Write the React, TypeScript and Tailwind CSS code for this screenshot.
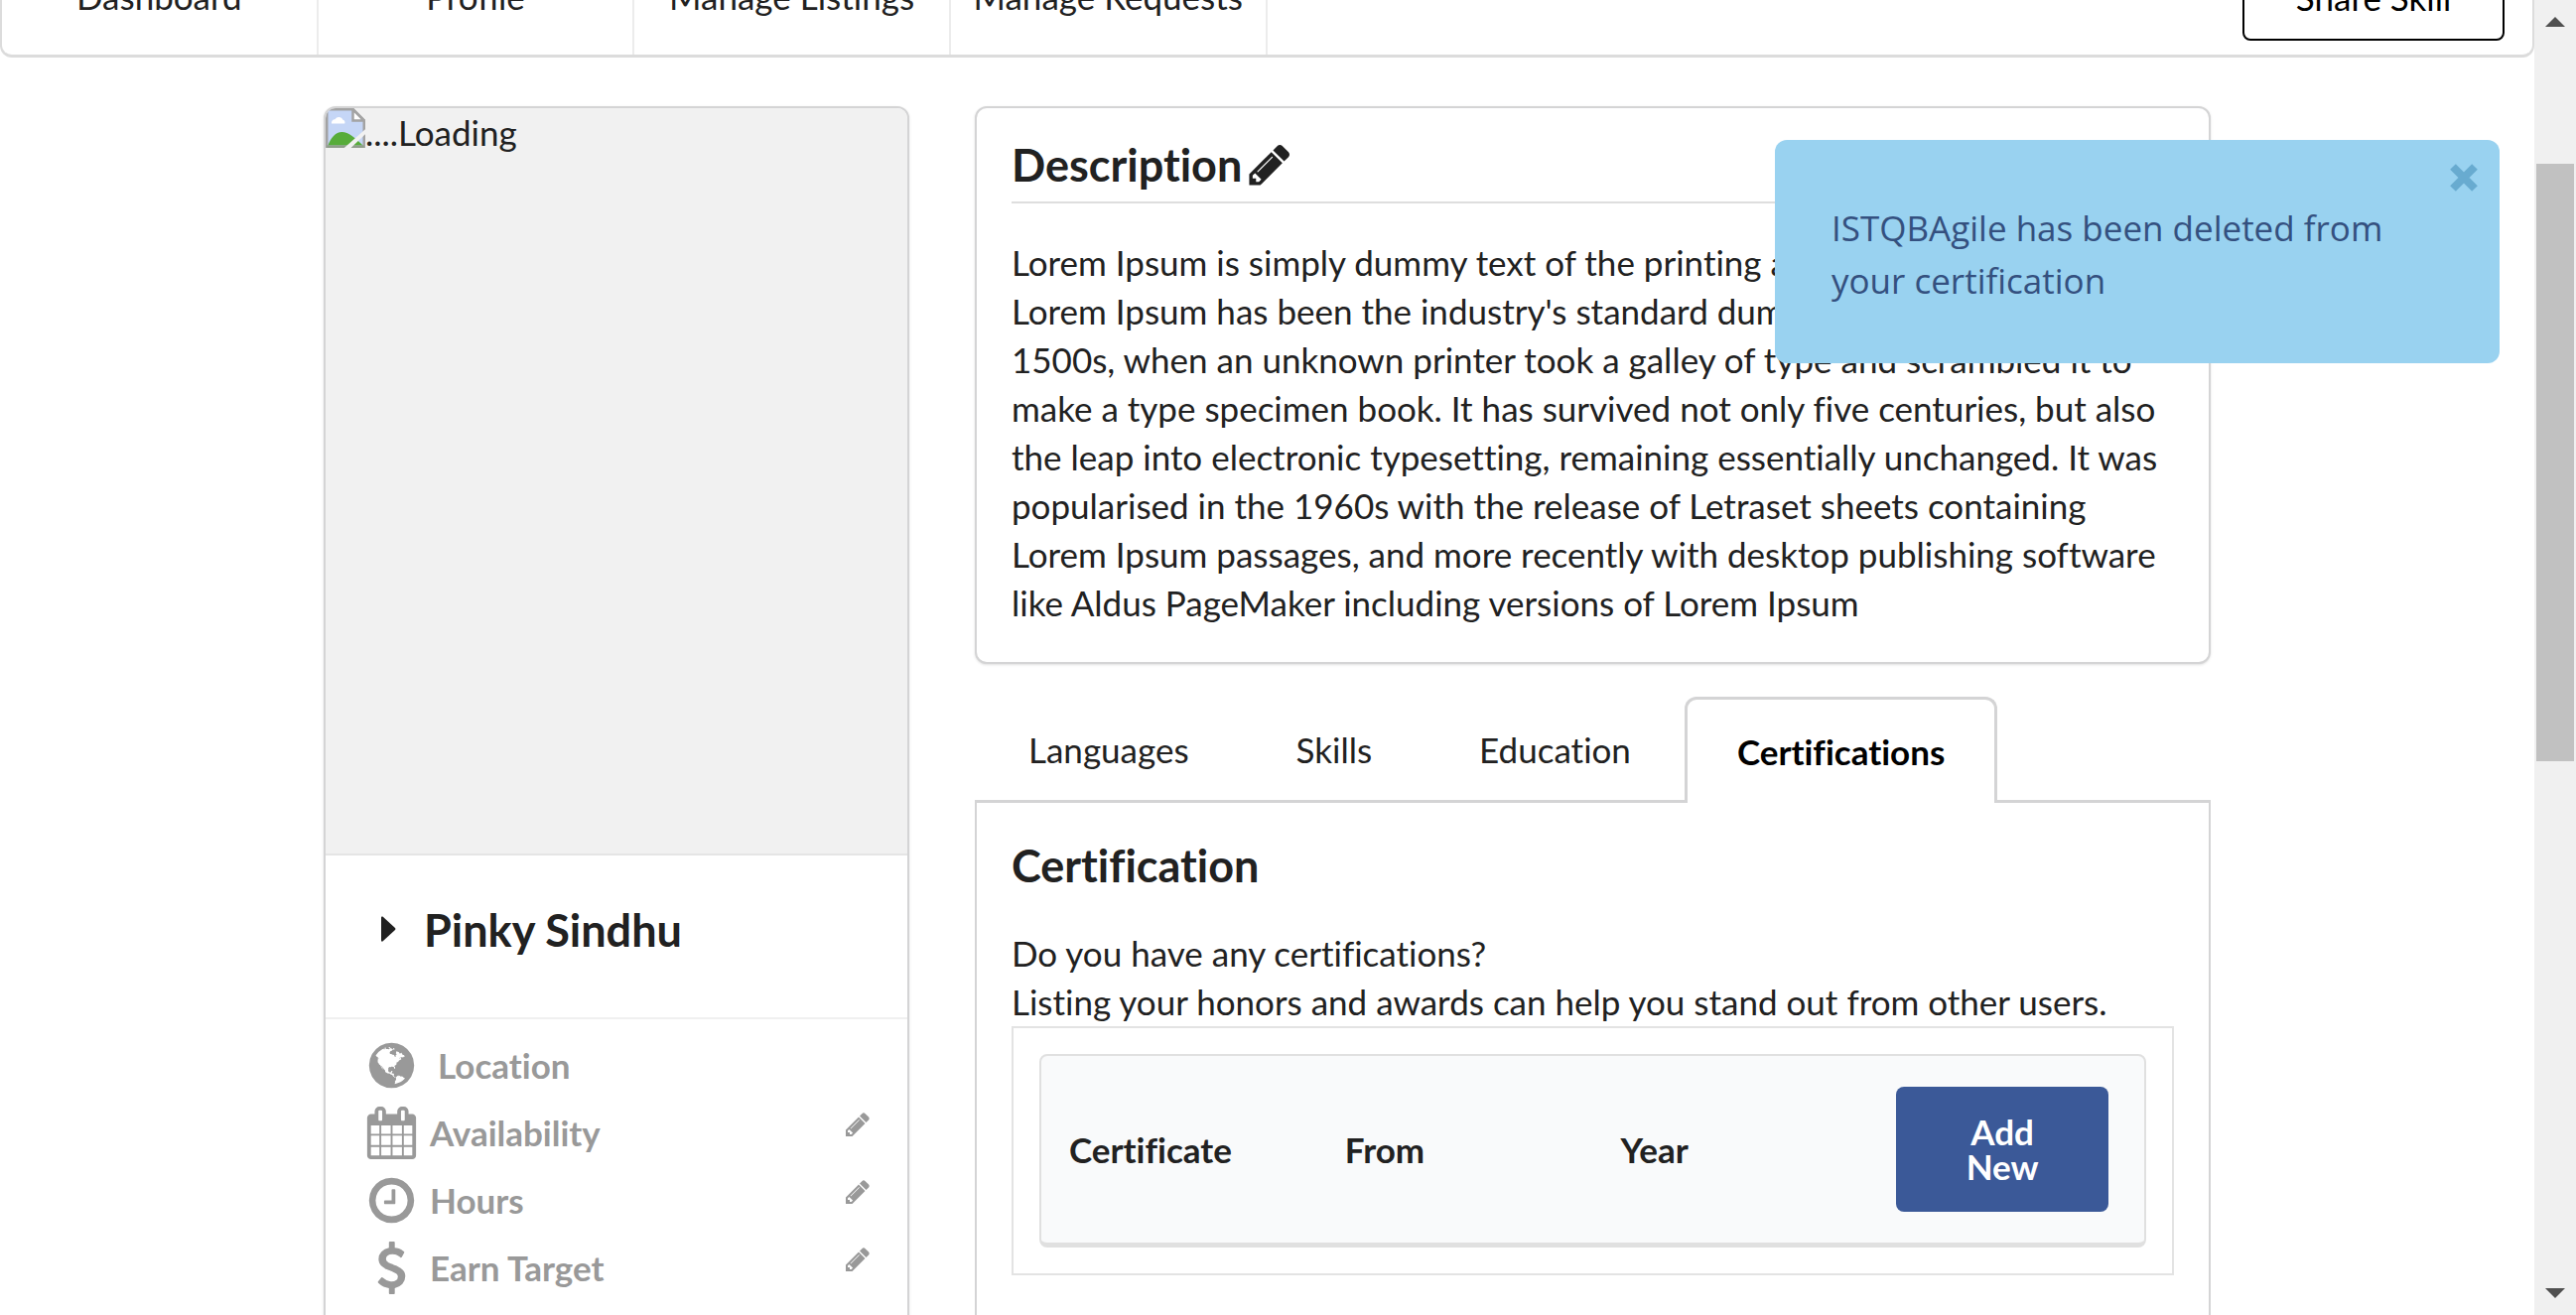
import React from "react";

const PENCIL =
  "M491 1536l91-91-235-235-91 91v107h128v128h107zm523-928q0-22-22-22-10 0-17 7l-542 542q-7 7-7 17 0 22 22 22 10 0 17-7l542-542q7-7 7-17zm-54-192l416 416-832 832h-416v-416zm683 96q0 53-37 90l-166 166-416-416 166-165q36-38 90-38 53 0 91 38l235 234q37 39 37 91z";
const CALENDAR =
  "M192 1664h288v-288h-288v288zm352 0h320v-288h-320v288zm-352-352h288v-320h-288v320zm352 0h320v-320h-320v320zm-352-384h288v-288h-288v288zm736 736h320v-288h-320v288zm-384-736h320v-288h-320v288zm768 736h288v-288h-288v288zm-384-352h320v-320h-320v320zm-352-864v-288q0-13-9.5-22.5t-22.5-9.5h-64q-13 0-22.5 9.5t-9.5 22.5v288q0 13 9.5 22.5t22.5 9.5h64q13 0 22.5-9.5t9.5-22.5zm736 864h288v-320h-288v320zm-384-384h320v-288h-320v288zm384 0h288v-288h-288v288zm32-480v-288q0-13-9.5-22.5t-22.5-9.5h-64q-13 0-22.5 9.5t-9.5 22.5v288q0 13 9.5 22.5t22.5 9.5h64q13 0 22.5-9.5t9.5-22.5zm384-64v1280q0 52-38 90t-90 38h-1408q-52 0-90-38t-38-90v-1280q0-52 38-90t90-38h128v-96q0-66 47-113t113-47h64q66 0 113 47t47 113v96h384v-96q0-66 47-113t113-47h64q66 0 113 47t47 113v96h128q52 0 90 38t38 90z";
const CLOCK =
  "M1024 544v448q0 14-9 23t-23 9h-320q-14 0-23-9t-9-23v-64q0-14 9-23t23-9h224v-352q0-14 9-23t23-9h64q14 0 23 9t9 23zm416 352q0-148-73-273t-198-198-273-73-273 73-198 198-73 273 73 273 198 198 273 73 273-73 198-198 73-273zm224 0q0 209-103 385.5t-279.5 279.5-385.5 103-385.5-103-279.5-279.5-103-385.5 103-385.5 279.5-279.5 385.5-103 385.5 103 279.5 279.5 103 385.5z";
const DOLLAR =
  "M1362 1185q0 153-99.5 263.5t-258.5 136.5v175q0 14-9 23t-23 9h-135q-13 0-22.5-9.5t-9.5-22.5v-175q-66-9-127.5-31t-101.5-44.5-74-48-46.5-37.5-17.5-18q-17-21-2-41l103-135q7-10 23-12 15-2 24 9l2 2q113 99 243 125 37 8 74 8 81 0 142.5-43t61.5-122q0-28-15-53t-33.5-42-58.5-37.5-66-32-80-32.5q-39-16-61.5-25t-61.5-26.5-62.5-31-56.5-35.5-53.5-42.5-43.5-49-35.5-58-21-66.5-8.5-78q0-138 98-242t255-134v-180q0-13 9.5-22.5t22.5-9.5h135q14 0 23 9t9 23v176q57 6 110.5 23t87 33.5 63.5 37.5 39 29 15 14q17 18 5 38l-81 146q-8 15-23 16-14 3-27-7-3-3-14.5-12t-39-26.5-58.5-32-74.5-26-85.5-11.5q-95 0-155 43t-60 111q0 26 8.5 48t29.5 41.5 39.5 33 56 31 60.5 27 70 27.5q53 20 81 31.5t76 35 75.5 42.5 62 50 53 63.5 31.5 76.5 13 94z";
const GLOBE =
  "M896 128q209 0 385.5 103t279.5 279.5 103 385.5-103 385.5-279.5 279.5-385.5 103-385.5-103-279.5-279.5-103-385.5 103-385.5 279.5-279.5 385.5-103zm274 521q-2 1-9.5 9.5t-13.5 9.5q2 0 4.5-5t5-11 3.5-7q6-7 22-15 14-6 52-12 34-8 51 11-2-2 9.5-13t14.5-12q3-2 15-4.5t15-7.5l2-22q-12 1-17.5-7t-6.5-21q0 2-6 8 0-7-4.5-8t-11.5 1-9 1q-10-3-15-7.5t-8-16.5-4-15q-2-5-9.5-11t-9.5-10q-1-2-2.5-5.5t-3-6.5-4-5.5-5.5-2.5-7 5-7.5 10-4.5 5q-3-2-6-1.5t-4.5 1-4.5 3-5 3.5q-3 2-8.5 3t-8.5 2q15-5-1-11-10-4-16-3 9-4 7.5-12t-8.5-14h5q-1-4-8.5-8.5t-17.5-8.5-13-6q-8-5-34-9.5t-33-.5q-5 6-4.5 10.5t4 14 3.5 12.5q1 6-5.5 13t-6.5 12q0 7 14 15.5t10 21.5q-3 8-16 16t-16 12q-5 8-1.5 18.5t10.5 16.5q2 2 1.5 4t-3.5 4.5-5.5 4-6.5 3.5l-3 2q-11 5-20.5-6t-13.5-26q-7-25-16-30-23-8-29 1-5-13-41-26-25-9-58-4 6-1 0-15-7-15-19-12 3-6 4-17.5t1-13.5q3-13 12-23 1-1 7-8.5t9.5-13.5.5-6q35 4 50-11 5-5 11.5-17t10.5-17q9-6 14-5.500t14.500 5.500 14.500 5q14 1 15.500-11t-7.500-20q12 1 3-17-4-7-8-9-12-4-27 5-8 4 2 8-1-1-9.500 10.500t-16.500 17.500-16-5q-1-1-5.500-13.500t-9.500-13.500q-8 0-16 15 3-8-11-15t-24-8q19-12-8-27-7-4-20.500-5t-19.500 4q-5 7-5.500 11.500t5 8 10.500 5.500 11.500 4 8.500 3q14 10 8 14-2 1-8.500 3.500t-11.500 4.500-6 4q-3 4 0 14t-2 14q-5-5-9-17.500t-7-16.500q7 9-25 6l-10-1q-4 0-16 2t-20.500 1-13.500-8q-4-8 0-20 1-4 4-2-4-3-11-9.500t-10-8.500q-46 15-94 41 6 1 12-1 5-2 13-6.500t10-5.500q34-14 42-7l5-5q14 16 20 25-7-4-30-1-20 6-22 12 7 12 5 18-4-3-11.500-10t-14.500-11-15-5q-16 0-22 1-146 80-235 222 7 7 12 8 4 1 5 9t2.500 11 11.500-3q9 8 3 19 1-1 44 27 19 17 21 21 3 11-10 18-1-2-9-9t-9-4q-3 5 .5 18.500t10.500 12.500q-7 0-9.500 16t-2.500 35.500-1 23.500l2 1q-3 12 5.500 34.500t21.500 19.500q-13 3 20 43 6 8 8 9 3 2 12 7.500t15 10 10 10.500q4 5 10 22.500t14 23.500q-2 6 9.500 20t10.500 23q-1 0-2.500 1t-2.500 1q3 7 15.500 14t15.500 13q1 3 2 10t3 11 8 2q2-20-24-62-15-25-17-29-3-5-5.500-15.500t-4.500-14.500q2 0 6 1.500t8.500 3.500 7.500 4 2 3q-3 7 2 17.500t12 18.500 17 19 12 13q6 6 14 19.500t0 13.500q9 0 20 10t17 20q5 8 8 26t5 24q2 7 8.500 13.500t12.500 9.500l16 8 13 7q5 2 18.500 10.500t21.500 11.500q10 4 16 4t14.500-2.500 13.500-3.500q15-2 29 15t21 21q36 19 55 11-2 1 .5 7.500t8 15.500 9 14.500 5.500 8.500q5 6 18 15t18 15q6-4 7-9-3 8 7 20t18 10q14-3 14-32-31 15-49-18 0-1-2.500-5.500t-4-8.500-2.500-8.500 0-7.500 5-3q9 0 10-3.500t-2-12.500-4-13q-1-8-11-20t-12-15q-5 9-16 8t-16-9q0 1-1.500 5.500t-1.500 6.500q-13 0-15-1 1-3 2.500-17.500t3.500-22.500q1-4 5.500-12t7.500-14.500 4-12.500-4.500-9.500-17.500-2.500q-19 1-26 20-1 3-3 10.500t-5 11.500-9 7q-7 3-24 2t-24-5q-13-8-22.500-29t-9.500-37q0-10 2.500-26.500t3-25-5.500-24.500q3-2 9-9.500t10-10.500q2-1 4.500-1.500t4.500 0 4-1.500 3-6q-1-1-4-3-3-3-4-3 7 3 28.500-1.500t27.500 1.500q15 11 22-2 0-1-2.500-9.500t-.5-13.500q5 27 29 9 3 3 15.500 5t17.500 5q3 2 7 5.500t5.500 4.500 5-.5 8.500-6.500q10 14 12 24 11 40 19 44 7 3 11 2t4.500-9.500 0-14-1.500-12.500l-1-8v-18l-1-8q-15-3-18.500-12t1.500-18.500 15-18.500q1-1 8-3.500t15.500-6.500 12.500-8q21-19 15-35 7 0 11-9-1 0-5-3t-7.500-5-4.500-2q9-5 2-16 5-3 7.500-11t7.500-10q9 12 21 2 8-8 1-16 5-7 20.500-10.500t18.500-9.500q7 2 8-2t1-12 3-12q4-5 15-9t13-5l17-11q3-4 0-4 18 2 31-11 10-11-6-20 3-6-3-9.500t-15-5.500q3-1 11.500-.5t10.500-1.500q15-10-7-16-17-5-43 12zm-163 877q206-36 351-189-3-3-12.500-4.500t-12.500-3.500q-18-7-24-8 1-7-2.500-13t-8-9-12.500-8-11-7q-2-2-7-6t-7-5.500-7.500-4.500-8.500-2-10 1l-3 1q-3 1-5.500 2.500t-5.500 3-4 3 0 2.500q-21-17-36-22-5-1-11-5.500t-10.500-7-10-1.500-11.500 7q-5 5-6 15t-2 13q-7-5 0-17.500t2-18.500q-3-6-10.500-4.500t-12 4.500-11.500 8.500-9 6.500-8.500 5.500-8.500 7.500q-3 4-6 12t-5 11q-2-4-11.500-6.500t-9.500-5.500q2 10 4 35t5 38q7 31-12 48-27 25-29 40-4 22 12 26 0 7-8 20.500t-7 21.500q0 6 2 16z";

function Glyph({ d, className }: { d: string; className: string }) {
  return (
    <svg viewBox="0 0 1792 1792" fill="currentColor" aria-hidden="true" className={className}>
      <path d={d} />
    </svg>
  );
}

function BrokenImage() {
  return (
    <svg viewBox="0 0 16 16" aria-hidden="true" className="size-10 shrink-0">
      <path d="M.5.5h10.600l4.400 4.400v10.600H.5z" fill="#c5d6f6" stroke="#a3a3a3" />
      <path d="M2.400 6.200a1.400 1.400 0 0 1 1.400-1.700A1.800 1.800 0 0 1 7 4.700 1.200 1.200 0 0 1 7.700 6.200z" fill="#fff" />
      <path d="M1 15c1-3 3-5.400 5.600-5.400S12 12 15 15z" fill="#57ac3a" />
      <path d="M.5 15.500h15" stroke="#8f9d8a" />
      <path d="M11 .5v4.500h4.500z" fill="#fff" stroke="#a3a3a3" />
      <path d="M16 8.500v2L10.200 16H7.500z" fill="#f1f1f1" />
    </svg>
  );
}

const navItems = ["Dashboard", "Profile", "Manage Listings", "Manage Requests"];

const details = [
  { label: "Location", icon: GLOBE, editable: false },
  { label: "Availability", icon: CALENDAR, editable: true },
  { label: "Hours", icon: CLOCK, editable: true },
  { label: "Earn Target", icon: DOLLAR, editable: true },
];

const tabs = ["Languages", "Skills", "Education", "Certifications"];

function NavBar() {
  return (
    <nav className="-mt-[62px] flex h-[120px] rounded-b-xl border-2 border-t-0 border-b-[3px] border-[#dcdcdc] bg-white">
      <div className="grid w-1/2 grid-cols-4">
        {navItems.map((item) => (
          <a
            key={item}
            href="#"
            className="flex items-center justify-center border-r-2 border-[#ececec] whitespace-nowrap"
          >
            {item}
          </a>
        ))}
      </div>
      <button className="mr-7 mb-[14px] ml-auto h-[88px] w-66 self-end rounded-lg border-2 border-black bg-white text-black">
        Share Skill
      </button>
    </nav>
  );
}

function ProfileCard() {
  return (
    <aside className="w-[590px] shrink-0 self-start overflow-hidden rounded-xl border-2 border-[#d4d4d5] bg-white shadow-sm">
      <div className="flex h-[753px] items-start border-b-2 border-[#e5e5e5] bg-[#f1f1f1]">
        <BrokenImage />
        <span>....Loading</span>
      </div>
      <div className="flex h-[165px] items-center gap-7 border-b-2 border-[#f0f0f0] pb-3 pl-14">
        <svg viewBox="0 0 15 26" fill="currentColor" aria-hidden="true" className="mb-1 h-[26px] w-[15px]">
          <path d="M0 1.500Q0 0 1.500.5L14 12q1 1 0 2L1.500 25.500Q0 26 0 24.500z" />
        </svg>
        <h2 className="text-[45px] font-bold">Pinky Sindhu</h2>
      </div>
      <ul className="pt-3 pb-16 font-bold text-[#999]">
        {details.map((d) => (
          <li key={d.label} className="flex h-[68px] items-center pr-9 pl-10">
            <Glyph d={d.icon} className="size-[53px] shrink-0" />
            <span className={d.editable ? "ml-3" : "ml-5"}>{d.label}</span>
            {d.editable && (
              <button aria-label={"Edit " + d.label} className="ml-auto pb-4">
                <Glyph d={PENCIL} className="size-7" />
              </button>
            )}
          </li>
        ))}
      </ul>
    </aside>
  );
}

function Description() {
  return (
    <section className="rounded-xl border-2 border-[#d4d4d5] bg-white px-[35px] pt-[28px] pb-[35px] shadow-sm">
      <h2 className="flex items-center gap-1 border-b-2 border-[#dedede] pb-2 text-[45px] leading-[58px] font-bold">
        Description
        <button aria-label="Edit description">
          <Glyph d={PENCIL} className="size-12" />
        </button>
      </h2>
      <p className="pt-[35px]">
        Lorem Ipsum is simply dummy text of the printing and typesetting industry. Lorem Ipsum has been the
        industry's standard dummy text ever since the 1500s, when an unknown printer took a galley of type and
        scrambled it to make a type specimen book. It has survived not only five centuries, but also the leap into
        electronic typesetting, remaining essentially unchanged. It was popularised in the 1960s with the release
        of Letraset sheets containing Lorem Ipsum passages, and more recently with desktop publishing software
        like Aldus PageMaker including versions of Lorem Ipsum
      </p>
    </section>
  );
}

function Certifications() {
  return (
    <section className="mt-[33px]">
      <div role="tablist" className="flex h-[107px] border-b-[3px] border-[#d4d4d5]">
        {tabs.map((tab) =>
          tab === "Certifications" ? (
            <button
              key={tab}
              role="tab"
              aria-selected="true"
              className="-mb-[3px] rounded-t-xl border-[3px] border-b-0 border-[#d4d4d5] bg-white px-[50px] font-bold text-black"
            >
              {tab}
            </button>
          ) : (
            <button key={tab} role="tab" aria-selected="false" className="border-t-[3px] border-transparent px-[54px]">
              {tab}
            </button>
          ),
        )}
      </div>
      <div className="border-x-2 border-[#d4d4d5] px-[35px] pt-[35px] pb-24">
        <h2 className="text-[45px] leading-[56px] font-bold">Certification</h2>
        <p className="pt-9">
          Do you have any certifications?
          <br />
          Listing your honors and awards can help you stand out from other users.
        </p>
        <div className="border-2 border-[#e3e3e3] p-[26px]">
          <div className="overflow-hidden rounded-lg border-2 border-b-[5px] border-[#e0e0e0] bg-[#f9fafb]">
            <table className="w-full table-fixed">
              <thead>
                <tr className="h-[188px] text-left">
                  <th className="px-7">Certificate</th>
                  <th className="px-7">From</th>
                  <th className="px-7">Year</th>
                  <th className="pr-9 pl-7">
                    <button className="w-full rounded-lg bg-[#3b5998] px-14 py-7 text-center leading-[35px] text-white">
                      Add New
                    </button>
                  </th>
                </tr>
              </thead>
            </table>
          </div>
        </div>
      </div>
    </section>
  );
}

function Toast() {
  return (
    <div
      role="alert"
      className="absolute top-[141px] right-[77px] flex h-[225px] w-[730px] rounded-xl bg-[#99d2f0] pt-[62px] pr-[100px] pl-[57px] font-['Open_Sans',sans-serif] text-[35px] leading-[53px] text-[#34507f]"
    >
      <p>ISTQBAgile has been deleted from your certification</p>
      <button aria-label="Close" className="absolute top-6 right-[22px] text-[#68abd0]">
        <svg viewBox="0 0 28 28" stroke="currentColor" strokeWidth="8" className="size-7">
          <path d="M3 3l22 22M25 3L3 25" />
        </svg>
      </button>
    </div>
  );
}

function ScrollTrack() {
  return (
    <div className="flex w-[42px] shrink-0 flex-col items-center bg-[#f0f0f0] text-[#505050]" aria-hidden="true">
      <svg viewBox="0 0 20 10" fill="currentColor" className="mt-[17px] w-5">
        <path d="M0 10L10 0l10 10z" />
      </svg>
      <div className="mt-[138px] h-[602px] w-[38px] bg-[#c1c1c1]" />
      <svg viewBox="0 0 20 10" fill="currentColor" className="mt-auto mb-[17px] w-5">
        <path d="M0 0l10 10L20 0z" />
      </svg>
    </div>
  );
}

export default function App() {
  return (
    <div className="relative flex h-screen overflow-hidden bg-white font-[Lato,sans-serif] text-[35px] leading-[49px] text-[#212121] [font-variant-ligatures:no-common-ligatures]">
      <div className="min-w-0 flex-1">
        <NavBar />
        <main className="flex gap-[66px] px-[326px] pt-[49px]">
          <ProfileCard />
          <div className="min-w-0 flex-1">
            <Description />
            <Certifications />
          </div>
        </main>
      </div>
      <ScrollTrack />
      <Toast />
    </div>
  );
}
